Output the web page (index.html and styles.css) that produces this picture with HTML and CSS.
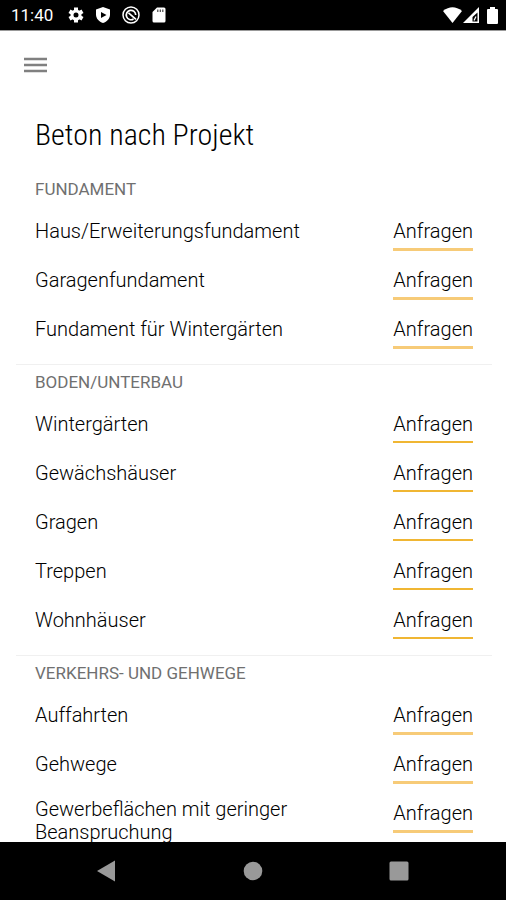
FILE: index.html
```html
<!DOCTYPE html>
<html lang="de">
<head>
<meta charset="utf-8">
<meta name="viewport" content="width=device-width, initial-scale=1">
<title>Beton nach Projekt</title>
<link rel="stylesheet" href="styles.css">
</head>
<body>
<div class="status">
  <span class="clock">11:40</span>
  <svg class="status-icon" viewBox="0 0 16 16"><g fill="none" stroke="#fff"><circle cx="8" cy="8" r="4" stroke-width="3"/><path stroke-width="4" d="M8 .5v3M8 12.500v3M1.500 4.250l2.600 1.500M11.900 10.250l2.600 1.500M1.500 11.750l2.600-1.500M11.900 5.750l2.600-1.500"/></g></svg>
  <svg class="status-icon" viewBox="0 0 16 16"><path fill="#fff" d="M8 0l7 2.500v5c0 4-3 7.300-7 8.500-4-1.200-7-4.500-7-8.500v-5z"/><path d="M6 5l5.500 3L6 11z"/></svg>
  <svg class="status-icon wide" viewBox="0 0 18 18"><g fill="none" stroke="#fff"><circle cx="9" cy="9" r="8" stroke-width="1.500"/><path stroke-width="1.700" d="M11.500 13A4.700 4.700 0 1 1 13.700 9M6.500 6.800l7.500 6.500"/></g></svg>
  <svg class="status-icon" viewBox="0 0 16 16"><path fill="#fff" d="M6 .5h7q1.500 0 1.500 1.500v12q0 1.500-1.500 1.500H3Q1.500 15.500 1.500 14V5z"/><path stroke="#444" stroke-width="1.200" d="M6.800 2.500v2.500M9.300 2.500v2.500M11.800 2.500v2.500"/></svg>
  <span class="signals">
    <svg width="19" height="16" viewBox="0 0 19 16"><path fill="#fff" d="M9.500 16L0 4Q9.500-3.500 19 4z"/></svg>
    <svg width="16" height="16" viewBox="0 0 16 16"><path fill="#fff" fill-rule="evenodd" d="M16 0v16H0zM14.500 5.500L9.500 10v4.500h5z"/><path stroke="#fff" stroke-width="1.200" d="M11 13.500l2-4"/></svg>
    <svg class="battery" width="11" height="17" viewBox="0 0 11 17"><path fill="#fff" d="M3 0h5v2h2q1 0 1 1v13q0 1-1 1H1q-1 0-1-1V3q0-1 1-1h2z"/></svg>
  </span>
</div>
<header class="appbar">
  <button class="menu" type="button" aria-label="Menü"><svg width="23" height="16" viewBox="0 0 23 16"><path stroke="#808080" stroke-width="2.500" d="M0 2h23M0 8h23M0 14h23"/></svg></button>
</header>
<main class="content">
  <h1>Beton nach Projekt</h1>
  <section class="group">
    <h2>FUNDAMENT</h2>
    <ul>
      <li><span>Haus/Erweiterungsfundament</span><button type="button">Anfragen</button></li>
      <li><span>Garagenfundament</span><button type="button">Anfragen</button></li>
      <li><span>Fundament für Wintergärten</span><button type="button">Anfragen</button></li>
    </ul>
  </section>
  <section class="group strong">
    <h2>BODEN/UNTERBAU</h2>
    <ul>
      <li><span>Wintergärten</span><button type="button">Anfragen</button></li>
      <li><span>Gewächshäuser</span><button type="button">Anfragen</button></li>
      <li><span>Gragen</span><button type="button">Anfragen</button></li>
      <li><span>Treppen</span><button type="button">Anfragen</button></li>
      <li><span>Wohnhäuser</span><button type="button">Anfragen</button></li>
    </ul>
  </section>
  <section class="group">
    <h2>VERKEHRS- UND GEHWEGE</h2>
    <ul>
      <li><span>Auffahrten</span><button type="button">Anfragen</button></li>
      <li><span>Gehwege</span><button type="button">Anfragen</button></li>
      <li><span>Gewerbeflächen mit geringer Beanspruchung</span><button type="button">Anfragen</button></li>
    </ul>
  </section>
</main>
<nav class="system">
  <button type="button" aria-label="Zurück"><svg width="20" height="22" viewBox="0 0 20 22"><path fill="#999" d="M18 .5v21L0 11z"/></svg></button>
  <button type="button" aria-label="Startseite"><svg width="20" height="20" viewBox="0 0 20 20"><circle cx="10" cy="10" r="9.300" fill="#999"/></svg></button>
  <button type="button" aria-label="Übersicht"><svg width="20" height="20" viewBox="0 0 20 20"><rect x=".5" y=".5" width="19" height="19" rx="1.500" fill="#999"/></svg></button>
</nav>
</body>
</html>
```
FILE: styles.css
```css
* { box-sizing: border-box; }

body {
  margin: 0;
  height: 100vh;
  display: flex;
  flex-direction: column;
  background: #fff;
  color: #000;
  font-family: Roboto, sans-serif;
  font-size: 20px;
  font-weight: 300;
  line-height: 23px;
}

button {
  border: 0;
  padding: 0;
  background: none;
  color: inherit;
  font: inherit;
}

svg { display: block; }

.status {
  flex: none;
  height: 31px;
  display: flex;
  align-items: center;
  gap: 11px;
  padding: 0 8px 0 11px;
  border-bottom: 1px solid #999;
  background: #000;
  color: #fff;
}

.clock { font-size: 17px; font-weight: 400; margin-right: 4px; }
.status-icon { width: 16px; height: 16px; }
.status-icon.wide { width: 18px; height: 18px; }
.signals { margin-left: auto; display: flex; align-items: center; gap: 1px; }
.battery { margin-left: 7px; }

.appbar {
  flex: none;
  height: 67px;
  padding: 0 24px;
  display: flex;
  align-items: center;
}

.content {
  flex: 1;
  min-height: 0;
  overflow: hidden;
  padding: 0 14px 0 16px;
}

h1 {
  margin: 0;
  padding: 19px 19px;
  font-family: "Roboto Condensed", Roboto, sans-serif;
  font-size: 30px;
  font-weight: 300;
  line-height: 36px;
}

.group {
  padding: 0 19px 10px;
  border-bottom: 1px solid #f0f0f0;
}

h2 {
  margin: 0;
  color: #707070;
  font-size: 17px;
  font-weight: 400;
  line-height: 35px;
}

ul { margin: 0; padding: 0; list-style: none; }

li {
  display: flex;
  align-items: flex-start;
  justify-content: space-between;
  gap: 80px;
}

li span {
  min-height: 49px;
  padding: 9px 0;
  display: flex;
  align-items: center;
}

li button {
  flex: none;
  margin-top: 12px;
  height: 32px;
  padding-bottom: 5px;
  border-bottom: 3px solid #f7cb78;
}

.strong li button { height: 31px; border-bottom: 2px solid #f0b633; }

.system {
  flex: none;
  height: 58px;
  display: flex;
  align-items: center;
  justify-content: space-around;
  padding: 0 34px;
  background: #000;
}
```
